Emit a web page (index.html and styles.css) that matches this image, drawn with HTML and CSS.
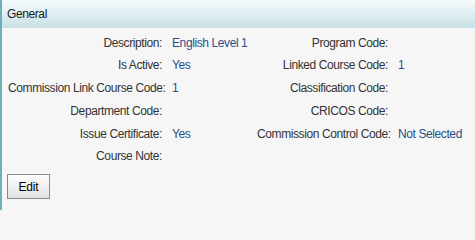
FILE: index.html
```html
<!DOCTYPE html>
<html>
<head>
<meta charset="utf-8">
<title>General</title>
<link rel="stylesheet" href="styles.css">
</head>
<body>
<div class="panel">
  <div class="panel-header">General</div>
  <div class="panel-body">
    <div class="fields">
      <div class="label">Description:</div><div class="value">English Level 1</div>
      <div class="label">Program Code:</div><div class="value"></div>

      <div class="label">Is Active:</div><div class="value">Yes</div>
      <div class="label">Linked Course Code:</div><div class="value">1</div>

      <div class="label">Commission Link Course Code:</div><div class="value">1</div>
      <div class="label">Classification Code:</div><div class="value"></div>

      <div class="label">Department Code:</div><div class="value"></div>
      <div class="label">CRICOS Code:</div><div class="value"></div>

      <div class="label">Issue Certificate:</div><div class="value">Yes</div>
      <div class="label">Commission Control Code:</div><div class="value">Not Selected</div>

      <div class="label">Course Note:</div><div class="value"></div>
      <div class="label"></div><div class="value"></div>
    </div>
    <button class="btn" type="button">Edit</button>
  </div>
</div>
</body>
</html>
```

FILE: styles.css
```css
html, body {
  margin: 0;
  padding: 0;
  background: #f6f6f6;
}

body {
  font-family: "Liberation Sans", Arial, sans-serif;
  font-size: 12px;
  letter-spacing: -0.4px;
  color: #333333;
}

.panel {
  width: 473px;
  height: 210px;
  border-left: 2px solid #6eb0bc;
  background: #f6f6f6;
  overflow: hidden;
}

.panel-header {
  height: 28px;
  line-height: 28px;
  padding-left: 5px;
  color: #1a1a1a;
  background: linear-gradient(to bottom, #f6fafb 0%, #e2eff2 45%, #c8e0e6 100%);
}

.panel-body {
  padding: 3.5px 0 0 0;
}

.fields {
  display: grid;
  grid-template-columns: 154px 75px 131px auto;
  column-gap: 10px;
  grid-auto-rows: 22.8px;
  line-height: 22.8px;
  padding-left: 6px;
}

.label {
  text-align: right;
  white-space: nowrap;
  color: #333333;
}

.value {
  white-space: nowrap;
  color: #2a4e86;
}

.btn {
  display: block;
  margin: 6px 0 0 5px;
  width: 43px;
  height: 25px;
  padding: 0;
  font-family: "Liberation Sans", Arial, sans-serif;
  font-size: 12px;
  letter-spacing: -0.2px;
  color: #000000;
  border: 1px solid #8a8a8a;
  border-radius: 0;
  background: linear-gradient(to bottom, #fdfdfd 0%, #f0f0f0 50%, #e3e3e3 100%);
}
```
